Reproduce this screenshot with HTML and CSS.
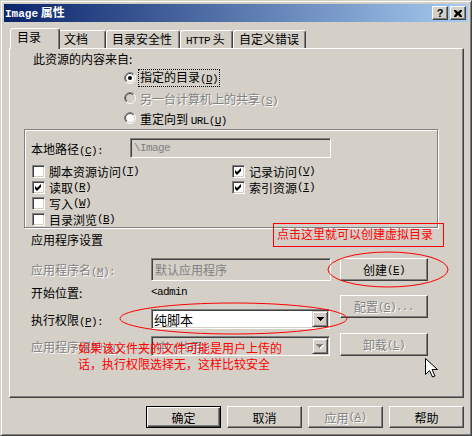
FILE: index.html
```html
<!DOCTYPE html>
<html>
<head>
<meta charset="utf-8">
<link rel="stylesheet" href="styles.css">
</head>
<body>
<svg class="defs" width="0" height="0">
  <defs>
    <linearGradient id="gOut" x1="0" y1="0" x2="1" y2="1">
      <stop offset="0.5" stop-color="#808080"/><stop offset="0.5" stop-color="#ffffff"/>
    </linearGradient>
    <linearGradient id="gIn" x1="0" y1="0" x2="1" y2="1">
      <stop offset="0.5" stop-color="#404040"/><stop offset="0.5" stop-color="#d4d0c8"/>
    </linearGradient>
  </defs>
</svg>
<div class="window">
  <div class="titlebar">
    <span class="title"><span class="tmono">Image</span> 属性</span>
    <div class="capbtns">
      <div class="capbtn"><span class="q">?</span></div>
      <div class="capbtn">
        <svg width="8" height="7" viewBox="0 0 8 7"><path d="M0 0h2l2 2l2-2h2v1l-2 2.5l2 2.5v1h-2l-2-2l-2 2h-2v-1l2-2.5l-2-2.5z" fill="#000"/></svg>
      </div>
    </div>
  </div>
  <div class="tabs">
    <div class="tab sel t1">目录</div>
    <div class="tab t2">文档</div>
    <div class="tab t3">目录安全性</div>
    <div class="tab t4"><span class="k">HTTP</span> 头</div>
    <div class="tab t5">自定义错误</div>
  </div>
  <div class="panel">
    <div class="heading">此资源的内容来自:</div>
    <div class="radio-row">
      <svg class="radio" width="12" height="12" viewBox="0 0 12 12"><circle cx="6" cy="6" r="5.5" fill="none" stroke="url(#gOut)"/><circle cx="6" cy="6" r="4.5" fill="#fff" stroke="url(#gIn)"/><circle cx="6" cy="6" r="2" fill="#000"/></svg>
      <span class="focus">指定的目录<span class="k">(<u>D</u>)</span></span>
    </div>
    <div class="radio-row dis">
      <svg class="radio" width="12" height="12" viewBox="0 0 12 12"><circle cx="6" cy="6" r="5.5" fill="none" stroke="url(#gOut)"/><circle cx="6" cy="6" r="4.5" fill="#d4d0c8" stroke="url(#gIn)"/></svg>
      <span class="rtext">另一台计算机上的共享<span class="k">(<u>S</u>)</span></span>
    </div>
    <div class="radio-row">
      <svg class="radio" width="12" height="12" viewBox="0 0 12 12"><circle cx="6" cy="6" r="5.5" fill="none" stroke="url(#gOut)"/><circle cx="6" cy="6" r="4.5" fill="#fff" stroke="url(#gIn)"/></svg>
      <span class="rtext">重定向到 <span class="k">URL(<u>U</u>)</span></span>
    </div>

    <div class="group">
      <div class="path-row">
        <span class="plabel">本地路径<span class="k">(<u>C</u>):</span></span>
        <div class="field gray"><span class="k">\Image</span></div>
      </div>
      <div class="checks">
        <div class="chk"><span class="cbox"></span>脚本资源访问<span class="k">(<u>T</u>)</span></div>
        <div class="chk"><span class="cbox"><svg width="9" height="9" viewBox="0 0 9 9"><path d="M1 3l2 2l4-4v3l-4 4l-2-2z" fill="#000"/></svg></span>记录访问<span class="k">(<u>V</u>)</span></div>
        <div class="chk"><span class="cbox"><svg width="9" height="9" viewBox="0 0 9 9"><path d="M1 3l2 2l4-4v3l-4 4l-2-2z" fill="#000"/></svg></span>读取<span class="k">(<u>R</u>)</span></div>
        <div class="chk"><span class="cbox"><svg width="9" height="9" viewBox="0 0 9 9"><path d="M1 3l2 2l4-4v3l-4 4l-2-2z" fill="#000"/></svg></span>索引资源<span class="k">(<u>I</u>)</span></div>
        <div class="chk"><span class="cbox"></span>写入<span class="k">(<u>W</u>)</span></div>
        <div class="chk"></div>
        <div class="chk"><span class="cbox"></span>目录浏览<span class="k">(<u>B</u>)</span></div>
        <div class="chk"></div>
      </div>
    </div>

    <div class="section">应用程序设置</div>
    <div class="app">
      <div class="app-left">
        <div class="arow r1">
          <span class="alabel dis">应用程序名<span class="k">(<u>M</u>):</span></span>
          <div class="field gray wide"><span class="gtext">默认应用程序</span></div>
        </div>
        <div class="arow r2">
          <span class="alabel">开始位置:</span>
          <span class="k">&lt;admin</span>
        </div>
        <div class="arow r3">
          <span class="alabel">执行权限<span class="k">(<u>P</u>):</span></span>
          <div class="combo">
            <span class="combo-text">纯脚本</span>
            <span class="combo-btn"><svg width="7" height="4" viewBox="0 0 7 4"><path d="M0 0h7v1h-1v1h-1v1h-1v1h-1v-1h-1v-1h-1v-1h-1z" fill="#000"/></svg></span>
          </div>
        </div>
        <div class="arow r4">
          <span class="alabel dis">应用程序保护<span class="k">(<u>N</u>):</span></span>
          <div class="combo gray">
            <span class="combo-text dis small">中 <span class="k">(</span>共用<span class="k">)</span></span>
            <span class="combo-btn"><svg width="8" height="5" viewBox="0 0 8 5"><path d="M1 1h7v1h-1v1h-1v1h-1v1h-1v-1h-1v-1h-1v-1h-1z" fill="#fff"/><path d="M0 0h7v1h-1v1h-1v1h-1v1h-1v-1h-1v-1h-1v-1h-1z" fill="#808080"/></svg></span>
          </div>
        </div>
      </div>
      <div class="app-right">
        <div class="btn b1">创建<span class="k">(<u>E</u>)</span></div>
        <div class="btn b2 dis">配置<span class="k">(<u>G</u>)...</span></div>
        <div class="btn b3 dis">卸载<span class="k">(<u>L</u>)</span></div>
      </div>
    </div>
  </div>
  <div class="footer">
    <div class="btn fbtn default">确定</div>
    <div class="btn fbtn">取消</div>
    <div class="btn fbtn dis">应用<span class="k">(<u>A</u>)</span></div>
    <div class="btn fbtn">帮助</div>
  </div>
</div>

<div class="note-box">点击这里就可以创建虚拟目录</div>
<svg class="ell ell1" width="122" height="37" viewBox="0 0 122 37"><ellipse cx="61" cy="18.5" rx="60" ry="17.5" fill="none" stroke="#ff0000" stroke-width="1"/></svg>
<svg class="ell ell2" width="229" height="33" viewBox="0 0 229 33"><ellipse cx="114.5" cy="16.5" rx="113.5" ry="15.5" fill="none" stroke="#ff0000" stroke-width="1"/></svg>
<div class="note-text">如果该文件夹的文件可能是用户上传的<br>话，执行权限选择无，这样比较安全</div>
<svg class="cursor" width="13" height="20" viewBox="0 0 13 20"><path d="M0.5 0.5v16l4-4l3 6.5l2.5-1l-3-6.5h5.5z" fill="#fff" stroke="#000" stroke-width="1"/></svg>
</body>
</html>
```
FILE: styles.css
```css
* { box-sizing: border-box; }
html, body { margin: 0; padding: 0; }
body {
  width: 472px; height: 436px; position: relative; overflow: hidden;
  font-family: "Noto Sans CJK SC", "Liberation Sans", sans-serif;
  font-size: 12px; color: #000; background: #d4d0c8;
}
.defs { position: absolute; }
.k { font-family: "Liberation Mono", monospace; font-size: 11px; letter-spacing: -0.6px; }
u { text-decoration: underline; text-underline-offset: 1px; }

.window {
  width: 472px; height: 436px; background: #d4d0c8;
  border: 1px solid; border-color: #d4d0c8 #404040 #404040 #d4d0c8;
  box-shadow: inset 1px 1px #fff, inset -1px -1px #808080;
  padding: 3px; display: flex; flex-direction: column;
}
.titlebar {
  height: 18px; display: flex; align-items: center; justify-content: space-between;
  background: linear-gradient(to right, #0a246a, #a6caf0);
  padding: 0 2px 0 1px;
}
.title { color: #fff; font-weight: bold; font-size: 12px; line-height: 18px; }
.tmono { font-family: "Liberation Mono", monospace; font-size: 11px; font-weight: bold; }
.capbtns { display: flex; gap: 2px; }
.capbtn {
  width: 16px; height: 14px; background: #d4d0c8;
  border: 1px solid; border-color: #fff #404040 #404040 #fff;
  box-shadow: inset -1px -1px #808080;
  display: flex; align-items: center; justify-content: center;
}
.q { font-family: "Liberation Sans", sans-serif; font-weight: bold; font-size: 11px; line-height: 12px; }

.tabs { display: flex; align-items: flex-end; height: 20px; margin-top: 6px; padding-left: 6px; }
.tab {
  height: 18px; background: #d4d0c8; line-height: 16px; padding-left: 5px;
  border: 1px solid; border-bottom: none; border-color: #fff #404040 transparent #fff;
  border-radius: 3px 3px 0 0; box-shadow: inset -1px 0 #808080;
  white-space: nowrap;
}
.tab.sel { height: 21px; margin-bottom: -1px; position: relative; z-index: 1; margin-right: -2px; padding-left: 6px; line-height: 15px; }
.t1 { width: 50px; }
.t2 { width: 48px; }
.t3 { width: 74px; }
.t4 { width: 53px; }
.t5 { width: 73px; }

.panel {
  height: 350px; width: 455px; margin-left: 5px;
  border: 1px solid; border-color: #fff #404040 #404040 #fff;
  box-shadow: inset -1px -1px #808080;
  padding-left: 21px;
}
.heading { height: 19px; line-height: 19px; margin-left: 2px; }
.radio-row { height: 20px; display: flex; align-items: center; margin-left: 93px; }
.radio { flex: none; margin-right: 3px; }
.focus { outline: 1px dotted #000; padding: 0 1px; line-height: 14px; }
.rtext { padding-left: 1px; }
.dis { color: #808080; text-shadow: 1px 1px 0 #fff; }

.group {
  margin-top: 1px; margin-left: -7px; width: 414px; height: 99px;
  border: 1px solid #808080;
  box-shadow: inset 1px 1px #fff, 1px 1px #fff;
  padding: 8px 0 0 6px;
}
.path-row { display: flex; align-items: center; height: 20px; }
.plabel { width: 99px; }
.field {
  height: 20px; width: 201px; background: #fff;
  border: 1px solid; border-color: #808080 #fff #fff #808080;
  box-shadow: inset 1px 1px #404040, inset -1px -1px #d4d0c8;
  padding-left: 3px; display: flex; align-items: center;
}
.field.gray { background: #d4d0c8; color: #808080; }
.field.wide { width: 180px; height: 23px; }
.gtext { color: #808080; }
.checks { margin-top: 5px; margin-left: 1px; display: grid; grid-template-columns: 200px auto; grid-auto-rows: 16px; }
.chk { display: flex; align-items: center; white-space: nowrap; }
.cbox {
  width: 13px; height: 13px; flex: none; margin-right: 4px; background: #fff;
  border: 1px solid; border-color: #808080 #fff #fff #808080;
  box-shadow: inset 1px 1px #404040, inset -1px -1px #d4d0c8;
  display: flex; align-items: center; justify-content: center;
}
.cbox svg { display: block; }

.section { margin-top: 4px; height: 16px; line-height: 16px; }
.app { display: flex; margin-top: 10px; }
.app-left { width: 300px; }
.arow { display: flex; align-items: center; }
.alabel { width: 120px; flex: none; }
.r1 { height: 23px; }
.r2 { height: 22px; }
.r3 { height: 20px; margin-top: 6px; }
.r4 { height: 20px; margin-top: 7px; }
.combo {
  width: 179px; height: 20px; background: #fff; display: flex; align-items: center;
  border: 1px solid; border-color: #808080 #fff #fff #808080;
  box-shadow: inset 1px 1px #404040, inset -1px -1px #d4d0c8;
  padding: 1px;
}
.combo.gray { background: #d4d0c8; }
.combo-text { font-size: 13px; padding-left: 1px; flex: 1; }
.combo-text.small { font-size: 12px; padding-left: 4px; }
.combo-btn {
  width: 16px; height: 16px; background: #d4d0c8; flex: none;
  border: 1px solid; border-color: #d4d0c8 #404040 #404040 #d4d0c8;
  box-shadow: inset 1px 1px #fff, inset -1px -1px #808080;
  display: flex; align-items: center; justify-content: center;
}
.combo-btn svg { display: block; }
.app-right { margin-left: 9px; width: 88px; display: flex; flex-direction: column; }
.btn {
  background: #d4d0c8; border: 1px solid; border-color: #fff #404040 #404040 #fff;
  box-shadow: inset -1px -1px #808080;
  display: flex; align-items: center; justify-content: center; white-space: nowrap;
}
.b1 { height: 23px; }
.b2 { height: 23px; margin-top: 14px; }
.b3 { height: 23px; margin-top: 15px; }
.footer { display: flex; justify-content: flex-end; gap: 6px; margin-top: 8px; padding-right: 4px; }
.fbtn { width: 75px; height: 22px; }
.fbtn.default { border-color: #000; box-shadow: inset 1px 1px #fff, inset -1px -1px #404040, inset -2px -2px #808080; }

.note-box {
  position: absolute; left: 273px; top: 223px; width: 171px; height: 24px;
  border: 1px solid #ff0000; color: #ff0000; padding-left: 3px; line-height: 20px;
}
.ell { position: absolute; }
.ell1 { left: 327px; top: 251px; }
.ell2 { left: 119px; top: 302px; }
.note-text { position: absolute; left: 78px; top: 340px; color: #ff0000; line-height: 16px; }
.cursor { position: absolute; left: 425px; top: 358px; }
```
